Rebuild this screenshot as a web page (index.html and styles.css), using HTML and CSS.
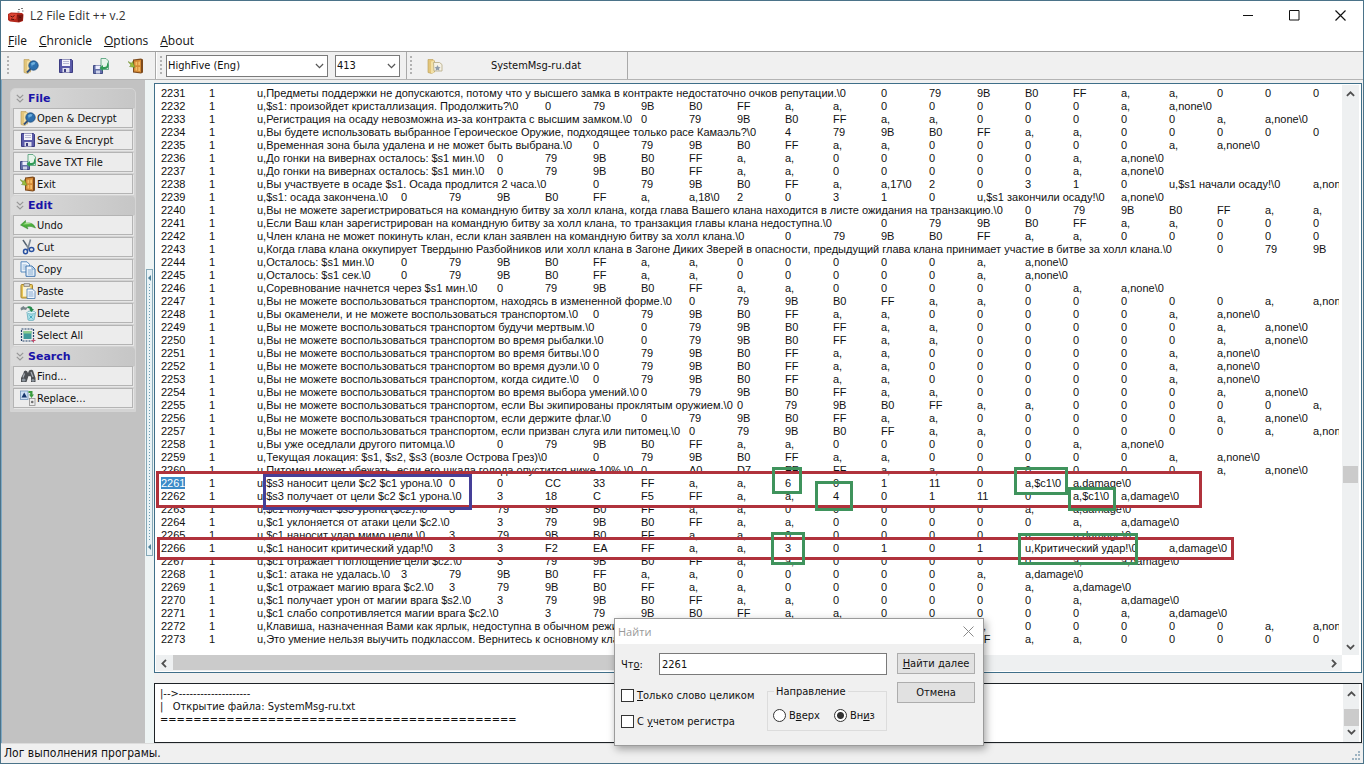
FILE: index.html
```html
<!DOCTYPE html>
<html lang="ru">
<head>
<meta charset="utf-8">
<title>L2 File Edit ++ v.2</title>
<link rel="stylesheet" href="styles.css">
</head>
<body>
<svg class="defs" aria-hidden="true">
  <symbol id="i-open" viewBox="0 0 16 16"><path d="M1 1.500h5l1.500 1.500v11l-3 1.500-3.500-1z" fill="#e3c67c" stroke="#b79a55" stroke-width=".6"/><path d="M4 3.500l3-1v12l-3 1z" fill="#f2e0a6"/><circle cx="10.500" cy="7.500" r="4.700" fill="#2c6fae" stroke="#1d4a78" stroke-width=".8"/><path d="M8 5.500q2-2.500 4.500-1l-1 2-2 .5-.5 2z" fill="#6fb0de"/><path d="M7.500 11l-3.500 3.500" stroke="#33507a" stroke-width="2"/></symbol>
  <symbol id="i-save" viewBox="0 0 16 16"><path d="M1.500 1.500h12l1 1v12h-13z" fill="#5a5aa8" stroke="#3c3c82"/><path d="M4 1.500h8v6.500H4z" fill="#f4f4fa"/><path d="M5 3.500h6M5 5.500h6" stroke="#a9a9c9" stroke-width=".8"/><path d="M4.500 10h7v4.500h-7z" fill="#e0e0ec"/><path d="M6 11h2v3H6z" fill="#3c3c82"/></symbol>
  <symbol id="i-txt" viewBox="0 0 16 16"><path d="M.5 7.500h9v8h-9z" fill="#6470a8" stroke="#414b85"/><path d="M2.500 7.500h5v3.500h-5z" fill="#eef"/><path d="M3 12.500h4v3H3z" fill="#cdd3ea"/><path d="M8 .5h5l2.500 2.500v8.500H8z" fill="#e6f4ea" stroke="#4a9a72" stroke-width=".8"/><path d="M14 4v3q0 2-2.500 2H10V7L6.500 10l3.500 3v-2h2q3.500 0 3.500-4z" fill="#2f9a55"/></symbol>
  <symbol id="i-exit" viewBox="0 0 16 16"><path d="M5 1.500l8-1 2 1v13l-2 1-8-1z" fill="#7e4a1c"/><path d="M6 2.500l7-.7v12.700l-7-1z" fill="#d58a35"/><path d="M7.500 4l1.700-.2v3.500H7.500zm2.800-.3l1.700-.2v3.800h-1.700zM7.500 9h1.700v3.500H7.500zm2.800 0h1.700v4h-1.700z" fill="#f4bd68"/><path d="M0 3.500l3.500 1.800 1-1.800 2.500 6-5.500-1L3 7z" fill="#9bbd3c" stroke="#67852a" stroke-width=".5"/></symbol>
  <symbol id="i-undo" viewBox="0 0 16 16"><path d="M.5 8l5-4.500v2.800Q13 4.500 15.500 11 11 8.500 7 9.800L8 12z" fill="#4cae3c" stroke="#2f8327" stroke-width=".5"/><path d="M3 7.500l3-2Q10 6 12 7z" fill="#a2df8a"/></symbol>
  <symbol id="i-cut" viewBox="0 0 16 16"><path d="M3 1l6 9M10.500 .5L7.500 11" stroke="#7b8794" stroke-width="1.600"/><path d="M3 1l3.500 5.300" stroke="#4b5968"/><ellipse cx="5.500" cy="12.500" rx="2" ry="2.300" fill="none" stroke="#2850a0" stroke-width="1.500"/><ellipse cx="11.500" cy="10.500" rx="2.300" ry="2" fill="none" stroke="#2850a0" stroke-width="1.500"/></symbol>
  <symbol id="i-copy" viewBox="0 0 16 16"><path d="M1 .8h6l2.500 2.500V11H1z" fill="#eff5fc" stroke="#5789bd"/><path d="M2.500 4h4M2.500 6h4M2.500 8h3" stroke="#7fa8d0" stroke-width=".8"/><path d="M6 5h6l3 3v7.300H6z" fill="#eff5fc" stroke="#3f74ae"/><path d="M12 5v3h3M7.800 9h5.500M7.800 11h5.500M7.800 13h5.500" fill="none" stroke="#6695c4" stroke-width=".8"/></symbol>
  <symbol id="i-paste" viewBox="0 0 16 16"><rect x="1" y="1.500" width="11.500" height="13.500" rx="1" fill="#e7c456" stroke="#a8852c"/><path d="M3 3.500h7.500v10H3z" fill="#faf3d5"/><path d="M4 .5h5.500v3H4z" fill="#cfcfcf" stroke="#808080" stroke-width=".7"/><path d="M7 6h5.500L15 8.500v7H7z" fill="#f0f6fd" stroke="#4678ae" stroke-width=".8"/><path d="M8.500 9h4.500M8.500 11h5M8.500 13h5" stroke="#6b97c5" stroke-width=".8"/></symbol>
  <symbol id="i-del" viewBox="0 0 16 16"><path d="M.5 3l3-2 1.500 1.500L8 2 6 5 3.500 4.500 1 5.500z" fill="#78858a"/><path d="M7 7.500h8.500L14 15l-3 .8L8 15z" fill="#a8dfe8" stroke="#5aa5b5" stroke-width=".7"/><ellipse cx="11.200" cy="7.500" rx="4.200" ry="1.500" fill="#ddf5f8" stroke="#5aa5b5" stroke-width=".7"/><path d="M7.500 1.500q4.500-1 5 2.500H14l-2.500 3L9 4.500h1.300Q10 3 7.500 3z" fill="#24894b"/><path d="M9.500 10.500l3 3m0-3l-3 3" stroke="#2f9bb2" stroke-width=".8"/></symbol>
  <symbol id="i-all" viewBox="0 0 16 16"><rect x="1.500" y="2" width="12" height="12" fill="none" stroke="#23406a" stroke-width="1.200" stroke-dasharray="2 1"/><rect x="3.500" y="4" width="8" height="8" fill="#3f9a9a"/><path d="M3.500 4h8v2.500h-8z" fill="#8dcb8e"/><path d="M13.500 11.500v4M11.500 13.500h4" stroke="#c24a6a"/></symbol>
  <symbol id="i-find" viewBox="0 0 16 16"><path d="M3.500 5q0-2.500 2-2.500T8 5l1-2.500q2.500-1.500 4 0L15.500 10v4h-4.500V8.500L8.500 8 6.500 14H1v-4z" fill="#4d5054"/><path d="M4.500 5.500L3 9.500M11 4l2 5" stroke="#a9b0b8" stroke-width="1.200"/><ellipse cx="3.700" cy="12" rx="2" ry="1.600" fill="#8c959e"/><ellipse cx="13" cy="12.300" rx="1.500" ry="1.400" fill="#8c959e"/></symbol>
  <symbol id="i-repl" viewBox="0 0 16 16"><rect x=".5" y="1" width="7.500" height="8.500" fill="#cddff4" stroke="#7193bb" stroke-width=".8"/><path d="M4.200 2.500L7 7.500H1.500z" fill="#15356b"/><path d="M8.500 1h4v3.500H14L11.500 8 9 4.500h1.200V3H8.500z" fill="#3a9b3d"/><rect x="9.500" y="8.500" width="5.500" height="7" fill="#ececec" stroke="#8d8d8d" stroke-width=".8"/><circle cx="12.200" cy="12" r="1.300" fill="#707070"/></symbol>
  <symbol id="i-doc" viewBox="0 0 16 16"><path d="M1 1.500h5l1.500 1.500v11l-3 1.500-3.500-1z" fill="#e3c67c" stroke="#b79a55" stroke-width=".6"/><path d="M4 3.500l3-1v12l-3 1z" fill="#f2e0a6"/><path d="M6.500 4.500h6l2.500 2v6.500H7z" fill="#f5f2e6" stroke="#b5a983" stroke-width=".8"/><path d="M10.500 7l1 2 2 .3-1.500 1.400.4 2-1.900-1-1.900 1 .4-2L7.500 9.300l2-.3z" fill="#8f9cab"/></symbol>
  <symbol id="c-down" viewBox="0 0 10 6"><path d="M1 .8l4 4 4-4" fill="none" stroke="currentColor" stroke-width="1.300"/></symbol>
  <symbol id="c-up" viewBox="0 0 10 6"><path d="M1 5.200l4-4 4 4" fill="none" stroke="currentColor" stroke-width="2"/></symbol>
  <symbol id="c-dn" viewBox="0 0 10 6"><path d="M1 .8l4 4 4-4" fill="none" stroke="currentColor" stroke-width="2"/></symbol>
  <symbol id="c-left" viewBox="0 0 6 10"><path d="M5.200 1l-4 4 4 4" fill="none" stroke="currentColor" stroke-width="2"/></symbol>
  <symbol id="c-right" viewBox="0 0 6 10"><path d="M.8 1l4 4-4 4" fill="none" stroke="currentColor" stroke-width="2"/></symbol>
  <symbol id="c-dbl" viewBox="0 0 8 9"><path d="M.8 .8L4 4 7.200 .8M.8 4.800L4 8l3.200-3.200" fill="none" stroke="#979797" stroke-width="1.200"/></symbol>
</svg>

<div class="window">
  <header class="title">
    <svg class="logo" viewBox="0 0 16 16"><path d="M0 6l3-1.500L14 5l1.500 1.500L15 13l-4 1.500L2 13.500 0 12z" fill="#b5281c"/><path d="M1 6.500l3-1 5 .5-1 5-6 .5z" fill="#dc4433"/><path d="M9 7l6-.5-.5 6-4.500 1.500z" fill="#7d1710"/><path d="M2.500 8l2 1 2-1.500M3 11l3 .5M11 9l2 .5" stroke="#521009" fill="none"/><path d="M10 1.500h2M13 .5h2M9.500 4h2M14 3h1.500" stroke="#777" stroke-width="1.200"/></svg>
    <span class="name">L2 File Edit ++ v.2</span>
    <span class="caption">
      <button aria-label="Minimize"><svg width="11" height="11"><path d="M0 5.500h10" stroke="#111"/></svg></button>
      <button aria-label="Maximize"><svg width="11" height="11"><path d="M.5 .5h9.500v9.500H.5z" fill="none" stroke="#111"/></svg></button>
      <button aria-label="Close"><svg width="11" height="11"><path d="M.5 .5l10 10m0-10l-10 10" stroke="#111" stroke-width="1.200"/></svg></button>
    </span>
  </header>
  <nav class="menu">
    <button><u>F</u>ile</button><button><u>C</u>hronicle</button><button><u>O</u>ptions</button><button><u>A</u>bout</button>
  </nav>
  <div class="tools">
    <div class="band files">
      <i class="grip"></i>
      <button aria-label="Open"><svg class="ic"><use href="#i-open"/></svg></button>
      <button aria-label="Save"><svg class="ic"><use href="#i-save"/></svg></button>
      <button aria-label="Save TXT"><svg class="ic"><use href="#i-txt"/></svg></button>
      <button aria-label="Exit"><svg class="ic"><use href="#i-exit"/></svg></button>
    </div>
    <div class="band picks">
      <i class="grip"></i>
      <span class="combo wide"><select aria-label="Chronicle"><option>HighFive (Eng)</option></select><svg><use href="#c-down"/></svg></span>
      <span class="combo"><select aria-label="Version"><option>413</option></select><svg><use href="#c-down"/></svg></span>
    </div>
    <div class="band doc">
      <i class="grip"></i>
      <button aria-label="Open document"><svg class="ic"><use href="#i-doc"/></svg></button>
      <span class="docname">SystemMsg-ru.dat</span>
    </div>
  </div>

  <div class="body">
    <aside class="side">
      <div class="panel">
        <h2><svg><use href="#c-dbl"/></svg>File</h2>
        <button><svg class="ic"><use href="#i-open"/></svg>Open &amp; Decrypt</button>
        <button><svg class="ic"><use href="#i-save"/></svg>Save &amp; Encrypt</button>
        <button><svg class="ic"><use href="#i-txt"/></svg>Save TXT File</button>
        <button><svg class="ic"><use href="#i-exit"/></svg>Exit</button>
        <h2><svg><use href="#c-dbl"/></svg>Edit</h2>
        <button><svg class="ic"><use href="#i-undo"/></svg>Undo</button>
        <button><svg class="ic"><use href="#i-cut"/></svg>Cut</button>
        <button><svg class="ic"><use href="#i-copy"/></svg>Copy</button>
        <button><svg class="ic"><use href="#i-paste"/></svg>Paste</button>
        <button><svg class="ic"><use href="#i-del"/></svg>Delete</button>
        <button><svg class="ic"><use href="#i-all"/></svg>Select All</button>
        <h2><svg><use href="#c-dbl"/></svg>Search</h2>
        <button><svg class="ic"><use href="#i-find"/></svg>Find...</button>
        <button><svg class="ic"><use href="#i-repl"/></svg>Replace...</button>
      </div>
    </aside>
    <div class="splitter"><div class="handle"><i></i><b></b><i></i></div></div>
    <main class="work">
      <section class="editor">
        <div class="text">
<table class="lines">
<colgroup><col span="25"></colgroup>
<tbody>
<tr><td>2231<td>1<td colspan="13">u,Предметы поддержки не допускаются, потому что у высшего замка в контракте недостаточно очков репутации.\0<td>0<td>79<td>9B<td>B0<td>FF<td>a,<td>a,<td>0<td>0<td>0
<tr><td>2232<td>1<td colspan="6">u,$s1: произойдет кристаллизация. Продолжить?\0<td>0<td>79<td>9B<td>B0<td>FF<td>a,<td>a,<td>0<td>0<td>0<td>0<td>0<td>a,<td>a,none\0
<tr><td>2233<td>1<td colspan="8">u,Регистрация на осаду невозможна из-за контракта с высшим замком.\0<td>0<td>79<td>9B<td>B0<td>FF<td>a,<td>a,<td>0<td>0<td>0<td>0<td>0<td>a,<td>a,none\0
<tr><td>2234<td>1<td colspan="11">u,Вы будете использовать выбранное Героическое Оружие, подходящее только расе Камаэль?\0<td>4<td>79<td>9B<td>B0<td>FF<td>a,<td>a,<td>0<td>0<td>0<td>0<td>0
<tr><td>2235<td>1<td colspan="7">u,Временная зона была удалена и не может быть выбрана.\0<td>0<td>79<td>9B<td>B0<td>FF<td>a,<td>a,<td>0<td>0<td>0<td>0<td>0<td>a,<td>a,none\0
<tr><td>2236<td>1<td colspan="5">u,До гонки на вивернах осталось: $s1 мин.\0<td>0<td>79<td>9B<td>B0<td>FF<td>a,<td>a,<td>0<td>0<td>0<td>0<td>0<td>a,<td>a,none\0
<tr><td>2237<td>1<td colspan="5">u,До гонки на вивернах осталось: $s1 мин.\0<td>0<td>79<td>9B<td>B0<td>FF<td>a,<td>a,<td>0<td>0<td>0<td>0<td>0<td>a,<td>a,none\0
<tr><td>2238<td>1<td colspan="7">u,Вы участвуете в осаде $s1. Осада продлится 2 часа.\0<td>0<td>79<td>9B<td>B0<td>FF<td>a,<td>a,17\0<td>2<td>0<td>3<td>1<td>0<td colspan="3">u,$s1 начали осаду!\0<td>a,none\0
<tr><td>2239<td>1<td colspan="3">u,$s1: осада закончена.\0<td>0<td>79<td>9B<td>B0<td>FF<td>a,<td>a,18\0<td>2<td>0<td>3<td>1<td>0<td colspan="3">u,$s1 закончили осаду!\0<td>a,none\0
<tr><td>2240<td>1<td colspan="16">u,Вы не можете зарегистрироваться на командную битву за холл клана, когда глава Вашего клана находится в листе ожидания на транзакцию.\0<td>0<td>79<td>9B<td>B0<td>FF<td>a,<td>a,
<tr><td>2241<td>1<td colspan="13">u,Если Ваш клан зарегистрирован на командную битву за холл клана, то транзакция главы клана недоступна.\0<td>0<td>79<td>9B<td>B0<td>FF<td>a,<td>a,<td>0<td>0<td>0
<tr><td>2242<td>1<td colspan="11">u,Член клана не может покинуть клан, если клан заявлен на командную битву за холл клана.\0<td>0<td>79<td>9B<td>B0<td>FF<td>a,<td>a,<td>0<td>0<td>0<td>0<td>0
<tr><td>2243<td>1<td colspan="20">u,Когда глава клана оккупирует Твердыню Разбойников или холл клана в Загоне Диких Зверей в опасности, предыдущий глава клана принимает участие в битве за холл клана.\0<td>0<td>79<td>9B
<tr><td>2244<td>1<td colspan="3">u,Осталось: $s1 мин.\0<td>0<td>79<td>9B<td>B0<td>FF<td>a,<td>a,<td>0<td>0<td>0<td>0<td>0<td>a,<td>a,none\0
<tr><td>2245<td>1<td colspan="3">u,Осталось: $s1 сек.\0<td>0<td>79<td>9B<td>B0<td>FF<td>a,<td>a,<td>0<td>0<td>0<td>0<td>0<td>a,<td>a,none\0
<tr><td>2246<td>1<td colspan="5">u,Соревнование начнется через $s1 мин.\0<td>0<td>79<td>9B<td>B0<td>FF<td>a,<td>a,<td>0<td>0<td>0<td>0<td>0<td>a,<td>a,none\0
<tr><td>2247<td>1<td colspan="9">u,Вы не можете воспользоваться транспортом, находясь в измененной форме.\0<td>0<td>79<td>9B<td>B0<td>FF<td>a,<td>a,<td>0<td>0<td>0<td>0<td>0<td>a,<td>a,none\0
<tr><td>2248<td>1<td colspan="7">u,Вы окаменели, и не можете воспользоваться транспортом.\0<td>0<td>79<td>9B<td>B0<td>FF<td>a,<td>a,<td>0<td>0<td>0<td>0<td>0<td>a,<td>a,none\0
<tr><td>2249<td>1<td colspan="8">u,Вы не можете воспользоваться транспортом будучи мертвым.\0<td>0<td>79<td>9B<td>B0<td>FF<td>a,<td>a,<td>0<td>0<td>0<td>0<td>0<td>a,<td>a,none\0
<tr><td>2250<td>1<td colspan="8">u,Вы не можете воспользоваться транспортом во время рыбалки.\0<td>0<td>79<td>9B<td>B0<td>FF<td>a,<td>a,<td>0<td>0<td>0<td>0<td>0<td>a,<td>a,none\0
<tr><td>2251<td>1<td colspan="7">u,Вы не можете воспользоваться транспортом во время битвы.\0<td>0<td>79<td>9B<td>B0<td>FF<td>a,<td>a,<td>0<td>0<td>0<td>0<td>0<td>a,<td>a,none\0
<tr><td>2252<td>1<td colspan="7">u,Вы не можете воспользоваться транспортом во время дуэли.\0<td>0<td>79<td>9B<td>B0<td>FF<td>a,<td>a,<td>0<td>0<td>0<td>0<td>0<td>a,<td>a,none\0
<tr><td>2253<td>1<td colspan="7">u,Вы не можете воспользоваться транспортом, когда сидите.\0<td>0<td>79<td>9B<td>B0<td>FF<td>a,<td>a,<td>0<td>0<td>0<td>0<td>0<td>a,<td>a,none\0
<tr><td>2254<td>1<td colspan="8">u,Вы не можете воспользоваться транспортом во время выбора умений.\0<td>0<td>79<td>9B<td>B0<td>FF<td>a,<td>a,<td>0<td>0<td>0<td>0<td>0<td>a,<td>a,none\0
<tr><td>2255<td>1<td colspan="10">u,Вы не можете воспользоваться транспортом, если Вы экипированы проклятым оружием.\0<td>0<td>79<td>9B<td>B0<td>FF<td>a,<td>a,<td>0<td>0<td>0<td>0<td>0<td>a,
<tr><td>2256<td>1<td colspan="8">u,Вы не можете воспользоваться транспортом, если держите флаг.\0<td>0<td>79<td>9B<td>B0<td>FF<td>a,<td>a,<td>0<td>0<td>0<td>0<td>0<td>a,<td>a,none\0
<tr><td>2257<td>1<td colspan="9">u,Вы не можете воспользоваться транспортом, если призван слуга или питомец.\0<td>0<td>79<td>9B<td>B0<td>FF<td>a,<td>a,<td>0<td>0<td>0<td>0<td>0<td>a,<td>a,none\0
<tr><td>2258<td>1<td colspan="5">u,Вы уже оседлали другого питомца.\0<td>0<td>79<td>9B<td>B0<td>FF<td>a,<td>a,<td>0<td>0<td>0<td>0<td>0<td>a,<td>a,none\0
<tr><td>2259<td>1<td colspan="7">u,Текущая локация: $s1, $s2, $s3 (возле Острова Грез)\0<td>0<td>79<td>9B<td>B0<td>FF<td>a,<td>a,<td>0<td>0<td>0<td>0<td>0<td>a,<td>a,none\0
<tr><td>2260<td>1<td colspan="8">u,Питомец может убежать, если его шкала голода опустится ниже 10%.\0<td>0<td>A0<td>D7<td>FF<td>FF<td>a,<td>a,<td>0<td>0<td>0<td>0<td>0<td>a,<td>a,none\0
<tr><td><mark>2261</mark><td>1<td colspan="4">u,$s3 наносит цели $c2 $c1 урона.\0<td>0<td>0<td>CC<td>33<td>FF<td>a,<td>a,<td>6<td>0<td>1<td>11<td>0<td>a,$c1\0<td>a,damage\0
<tr><td>2262<td>1<td colspan="5">u,$s3 получает от цели $c2 $c1 урона.\0<td>3<td>18<td>C<td>F5<td>FF<td>a,<td>a,<td>4<td>0<td>1<td>11<td>0<td>a,$c1\0<td>a,damage\0
<tr><td>2263<td>1<td colspan="4">u,$c1 получает $s3 урона ($c2).\0<td>3<td>79<td>9B<td>B0<td>FF<td>a,<td>a,<td>0<td>0<td>0<td>0<td>0<td>a,<td>a,damage\0
<tr><td>2264<td>1<td colspan="5">u,$c1 уклоняется от атаки цели $c2.\0<td>3<td>79<td>9B<td>B0<td>FF<td>a,<td>a,<td>0<td>0<td>0<td>0<td>0<td>a,<td>a,damage\0
<tr><td>2265<td>1<td colspan="4">u,$c1 наносит удар мимо цели.\0<td>3<td>79<td>9B<td>B0<td>FF<td>a,<td>a,<td>0<td>0<td>0<td>0<td>0<td>a,<td>a,damage\0
<tr><td>2266<td>1<td colspan="4">u,$c1 наносит критический удар!\0<td>3<td>3<td>F2<td>EA<td>FF<td>a,<td>a,<td>3<td>0<td>1<td>0<td>1<td colspan="3">u,Критический удар!\0<td>a,damage\0
<tr><td>2267<td>1<td colspan="5">u,$c1 отражает Поглощение цели $c2.\0<td>3<td>79<td>9B<td>B0<td>FF<td>a,<td>a,<td>0<td>0<td>0<td>0<td>0<td>a,<td>a,damage\0
<tr><td>2268<td>1<td colspan="3">u,$c1: атака не удалась.\0<td>3<td>79<td>9B<td>B0<td>FF<td>a,<td>a,<td>0<td>0<td>0<td>0<td>0<td>a,<td>a,damage\0
<tr><td>2269<td>1<td colspan="4">u,$c1 отражает магию врага $c2.\0<td>3<td>79<td>9B<td>B0<td>FF<td>a,<td>a,<td>0<td>0<td>0<td>0<td>0<td>a,<td>a,damage\0
<tr><td>2270<td>1<td colspan="5">u,$c1 получает урон от магии врага $s2.\0<td>3<td>79<td>9B<td>B0<td>FF<td>a,<td>a,<td>0<td>0<td>0<td>0<td>0<td>a,<td>a,damage\0
<tr><td>2271<td>1<td colspan="6">u,$c1 слабо сопротивляется магии врага $c2.\0<td>3<td>79<td>9B<td>B0<td>FF<td>a,<td>a,<td>0<td>0<td>0<td>0<td>0<td>a,<td>a,damage\0
<tr><td>2272<td>1<td colspan="9">u,Клавиша, назначенная Вами как ярлык, недоступна в обычном режиме.\0<td>0<td>79<td>9B<td>B0<td>FF<td>a,<td>a,<td>0<td>0<td>0<td>0<td>0<td>a,<td>a,none\0
<tr><td>2273<td>1<td colspan="11">u,Это умение нельзя выучить подклассом. Вернитесь к основному классу.\0<td>0<td>79<td>9B<td>B0<td>FF<td>a,<td>a,<td>0<td>0<td>0<td>0<td>0
</tbody>
</table>
        </div>
        <div class="vbar"><svg><use href="#c-up"/></svg><div class="track"><b class="thumb"></b></div><svg><use href="#c-dn"/></svg></div>
        <div class="hbar"><svg><use href="#c-left"/></svg><div class="track"><b class="thumb"></b></div><svg><use href="#c-right"/></svg></div>
        <i class="mark red r1"></i><i class="mark red r2"></i><i class="mark blue"></i>
        <i class="mark green g1"></i><i class="mark green g2"></i><i class="mark green g3"></i>
        <i class="mark green g4"></i><i class="mark green g5"></i><i class="mark green g6"></i>
      </section>
      <section class="log">
        <div class="logtext">
          <p>|--&gt;--------------------</p>
          <p>|&nbsp;&nbsp; Открытие файла: SystemMsg-ru.txt</p>
          <p>===========================================</p>
        </div>
        <div class="vbar"><svg><use href="#c-up"/></svg><div class="track"><b class="thumb"></b></div><svg><use href="#c-dn"/></svg></div>
      </section>
    </main>
  </div>
  <footer class="status"><span>Лог выполнения програмы.</span>
    <svg class="size" viewBox="0 0 10 10"><path d="M7 1h2M4 4h2M7 4h2M1 8h2M4 8h2M7 8h2" stroke="#9fb4c2" stroke-width="2"/></svg>
  </footer>

  <form class="dialog" role="dialog" aria-label="Найти">
    <div class="dtitle"><span>Найти</span><button type="button" aria-label="Закрыть"><svg width="11" height="11"><path d="M.5 .5l10 10m0-10l-10 10" stroke="#8a8a8a"/></svg></button></div>
    <div class="dbody">
      <div class="left">
        <div class="what"><label for="q"><span>Чт<u>о</u>:</span></label><input id="q" type="text" value="2261"></div>
        <div class="opts">
          <div class="checks">
            <label><input type="checkbox"><span><u>Т</u>олько слово целиком</span></label>
            <label><input type="checkbox"><span>С <u>у</u>четом регистра</span></label>
          </div>
          <fieldset><legend>Направление</legend>
            <label><input type="radio" name="dir"><span>В<u>в</u>ерх</span></label>
            <label><input type="radio" name="dir" checked><span>Вн<u>и</u>з</span></label>
          </fieldset>
        </div>
      </div>
      <div class="acts"><button type="button"><u>Н</u>айти далее</button><button type="button">Отмена</button></div>
    </div>
  </form>
</div>
</body>
</html>
```
FILE: styles.css
```css
* { box-sizing: border-box; }
body {
  margin: 0;
  font: 11px/13px "DejaVu Sans Condensed", "DejaVu Sans", sans-serif;
  color: #111;
}
button, input, select { font: inherit; color: inherit; margin: 0; padding: 0; }
button { border: 0; background: none; }
h2, p { margin: 0; }
svg { display: block; flex: none; }
.defs { position: absolute; width: 0; height: 0; }
.ic { width: 16px; height: 16px; }

.window {
  position: relative;
  display: flex;
  flex-direction: column;
  height: 100vh;
  background: #f0f0f0;
  border: 1px solid #4b7389;
  overflow: hidden;
}
.title {
  display: flex;
  align-items: center;
  height: 29px;
  padding-left: 7px;
  background: #fff;
  font: 12px/16px "Open Sans", sans-serif;
}
.logo { width: 16px; height: 16px; }
.name { margin-left: 6px; color: #333; }
.caption { display: flex; margin-left: auto; }
.caption button { display: grid; place-items: center; width: 46px; height: 28px; }

.menu {
  display: flex;
  height: 21px;
  padding-left: 7px;
  gap: 12px;
  background: #fff;
  font: 12px/21px "Open Sans", sans-serif;
}
.tools {
  display: flex;
  height: 29px;
  border-top: 1px solid #a0a0a0;
  border-bottom: 1px solid #b4b4b4;
}
.band {
  display: flex;
  align-items: center;
  padding-left: 6px;
  border-right: 1px solid #a9a9a9;
}
.files { width: 155px; gap: 19px; }
.files .grip { margin-right: -6px; }
.picks { width: 251px; gap: 7px; border-left: 1px solid #fff; padding-left: 3px; }
.picks .grip { margin-right: -4px; }
.doc { width: 221px; padding-left: 3px; }
.grip { width: 3px; height: 20px; background: radial-gradient(circle at 1px 1px, #b2b2b2 1px, transparent 1px) 0 0 / 3px 4px; }
.doc button { margin-left: 14px; }
.docname { flex: 1; padding-left: 2px; text-align: center; }
.combo { position: relative; width: 65px; height: 22px; }
.combo.wide { width: 162px; }
.combo select {
  width: 100%;
  height: 100%;
  padding-left: 1px;
  appearance: none;
  background: #fff;
  border: 1px solid #7a7a7a;
  border-radius: 0;
}
.combo svg { position: absolute; right: 4px; top: 8px; width: 9px; height: 6px; color: #555; }

.body { flex: 1; display: flex; min-height: 0; }
.side {
  width: 144px;
  padding: 9px 10px 0 9px;
  background: #c2c2c2;
  border-left: 1px solid #7fa9c4;
}
.panel { padding-bottom: 1px; background: #d3d3d3; border-radius: 4px 4px 0 0; outline: 1px solid #d4d4d4; }
.panel h2 {
  display: flex;
  align-items: center;
  gap: 4px;
  height: 19px;
  padding-left: 5px;
  background: linear-gradient(90deg, #dadada, #c6c6c6);
  border-radius: 4px 4px 0 0;
  font: bold 11px/17px "DejaVu Sans", sans-serif;
  color: #1a14a8;
}
.panel h2 svg { width: 8px; height: 9px; }
.panel button {
  display: flex;
  align-items: center;
  gap: 1px;
  width: 120px;
  height: 20px;
  margin: 0 0 2px 2px;
  padding-left: 6px;
  background: #ececec;
  border: 1px solid #b4b4b4;
  box-shadow: 1px 1px 0 #e6e6e6;
}
.splitter { width: 9px; padding: 189px 1px 0 1px; background: #eef4f4; }
.handle {
  display: flex;
  flex-direction: column;
  align-items: center;
  justify-content: space-between;
  height: 287px;
  padding: 5px 0;
  background: #e9f3f6;
  border: 1px solid #86a9b8;
}
.handle i { border: 3px solid transparent; border-left: 0; border-right: 3px solid #4a7f98; }
.handle b { flex: 1; width: 1px; margin: 3px 0; background: repeating-linear-gradient(#6d9db4 0 1px, transparent 1px 3px); }

.work { flex: 1; display: flex; flex-direction: column; gap: 10px; min-width: 0; padding: 3px 1px 0 0; }
.editor {
  position: relative;
  flex: 1;
  display: grid;
  grid-template: minmax(0, 1fr) 16px / minmax(0, 1fr) 17px;
  min-height: 0;
  padding: 1px 2px 1px 1px;
  background: #fff;
  border: 1px solid #3f6f89;
}
.text { overflow: hidden; margin-right: 3px; padding: 2px 0 0 5px; font-family: "Liberation Sans", Arial, sans-serif; }
.lines { width: 1200px; table-layout: fixed; border-collapse: collapse; }
.lines td { height: 13px; padding: 0; white-space: nowrap; line-height: 13px; }
mark { background: #3c8bc8; color: #fff; }

.vbar { display: flex; flex-direction: column; align-items: center; padding: 6px 0 5px; background: #eef0f1; color: #505050; }
.vbar svg { width: 9px; height: 6px; }
.vbar .track { flex: 1; width: 15px; }
.thumb { display: block; background: #cbcbcb; }
.editor .vbar .thumb { height: 17px; margin-top: 369px; }
.hbar { display: flex; align-items: center; padding: 0 5px; background: #eef0f1; color: #505050; }
.hbar svg { width: 6px; height: 9px; }
.hbar .track { flex: 1; height: 16px; }
.hbar .thumb { width: 62%; height: 15px; margin-left: 6px; }

.mark { position: absolute; border: 4px solid; }
.red { color: #b0323c; border-width: 3px; }
.r1 { left: 1px; top: 387px; width: 1046px; height: 37px; }
.r2 { left: 2px; top: 453px; width: 1077px; height: 23px; }
.blue { left: 108px; top: 390px; width: 209px; height: 36px; color: #453f98; border-width: 3px; }
.green { color: #3f935c; border-width: 3px; }
.g1 { left: 617px; top: 383px; width: 30px; height: 27px; }
.g2 { left: 660px; top: 397px; width: 38px; height: 30px; }
.g3 { left: 616px; top: 448px; width: 34px; height: 33px; }
.g4 { left: 859px; top: 383px; width: 54px; height: 28px; }
.g5 { left: 913px; top: 403px; width: 48px; height: 24px; }
.g6 { left: 863px; top: 449px; width: 120px; height: 32px; }

.log { display: flex; height: 60px; background: #fff; border: 1px solid #1d2226; }
.logtext { flex: 1; padding: 3px 0 0 5px; white-space: nowrap; }
.log .vbar { width: 16px; margin-right: 2px; padding: 7px 0; }
.log .track { padding-top: 12px; }
.log .thumb { height: 17px; }

.status { display: flex; align-items: center; height: 20px; padding: 0 2px 0 3px; border-top: 1px solid #dcdcdc; font-size: 12px; }
.size { width: 10px; height: 10px; margin: 5px 0 0 auto; }

.dialog {
  position: absolute;
  left: 613px;
  top: 617px;
  width: 370px;
  background: #f0f0f0;
  border: 1px solid #9b9b9b;
  box-shadow: 2px 3px 8px rgba(0, 0, 0, .35);
}
.dtitle { display: flex; align-items: center; justify-content: space-between; height: 25px; padding: 0 9px 0 3px; background: #fff; font: 11px/16px "Open Sans", sans-serif; color: #999; }
.dbody { display: flex; justify-content: space-between; padding: 9px 8px 14px 6px; }
.left { display: flex; flex-direction: column; gap: 10px; width: 266px; }
.what { display: flex; align-items: center; justify-content: space-between; }
.what input { width: 228px; height: 22px; padding: 0 2px; background: #fff; border: 1px solid #7a7a7a; }
.opts { display: flex; justify-content: space-between; white-space: nowrap; }
.checks { display: flex; flex-direction: column; gap: 13px; padding-top: 4px; }
label { display: flex; align-items: center; gap: 3px; }
input[type=checkbox], input[type=radio] { flex: none; width: 13px; height: 13px; appearance: none; background: #fff; border: 1px solid #333; }
input[type=radio] { border-radius: 50%; }
input[type=radio]:checked { background: radial-gradient(circle, #333 3px, #fff 4px); }
fieldset { display: flex; gap: 14px; width: 120px; height: 46px; margin: 0; padding: 11px 5px 9px; border: 1px solid #dcdcdc; }
legend { margin-left: 1px; padding: 0 2px; line-height: 13px; }
.acts { display: flex; flex-direction: column; gap: 8px; }
.acts button { width: 78px; height: 21px; background: #e1e1e1; border: 1px solid #adadad; white-space: nowrap; }
```
